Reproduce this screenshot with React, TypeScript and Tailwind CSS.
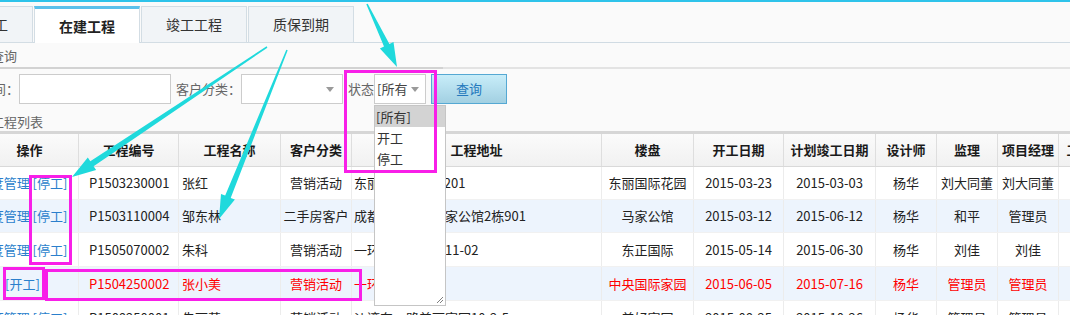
import React from "react";

type Row = {
  op: string;
  code: string;
  name: string;
  type: string;
  addr: string;
  estate: string;
  start: string;
  end: string;
  designer: string;
  sup: string;
  pm: string;
  red?: boolean;
  alt?: boolean;
  h: string;
};

const rows: Row[] = [
  { op: "进度管理 [停工]", code: "P1503230001", name: "张红", type: "营销活动", addr: "东丽国际花园1-201", estate: "东丽国际花园", start: "2015-03-23", end: "2015-03-03", designer: "杨华", sup: "刘大同董", pm: "刘大同董", h: "h-[33px]" },
  { op: "进度管理 [停工]", code: "P1503110004", name: "邹东林", type: "二手房客户", addr: "成都市金牛区马家公馆2栋901", estate: "马家公馆", start: "2015-03-12", end: "2015-06-12", designer: "杨华", sup: "和平", pm: "管理员", alt: true, h: "h-[33px]" },
  { op: "进度管理 [停工]", code: "P1505070002", name: "朱科", type: "营销活动", addr: "一环路锦绣花园11-02", estate: "东正国际", start: "2015-05-14", end: "2015-06-30", designer: "杨华", sup: "刘佳", pm: "刘佳", h: "h-[34px]" },
  { op: "[开工]", code: "P1504250002", name: "张小美", type: "营销活动", addr: "一环路锦绣花园", estate: "中央国际家园", start: "2015-06-05", end: "2015-07-16", designer: "杨华", sup: "管理员", pm: "管理员", red: true, alt: true, h: "h-[34px]" },
  { op: "进度管理 [停工]", code: "P1508250001", name: "朱丽英", type: "营销活动", addr: "沙湾东一路美丽家园10-2-5", estate: "美好家园", start: "2015-08-25", end: "2015-10-26", designer: "杨华", sup: "管理员", pm: "管理员", h: "h-[34px]" },
];

const headers = ["操作", "工程编号", "工程名称", "客户分类", "工程地址", "楼盘", "开工日期", "计划竣工日期", "设计师", "监理", "项目经理", "工程状态"];

const bodyAlign = [
  "justify-center pr-[14px]",
  "pl-[10px]",
  "pl-[3px]",
  "justify-center",
  "pl-[2px]",
  "justify-center",
  "justify-center",
  "justify-center",
  "justify-center",
  "justify-center",
  "justify-center",
  "justify-center",
];

const GRID =
  "grid grid-cols-[98px_100px_102px_71px_250px_92px_90px_92px_61px_61px_61px_68px]";

function Caret() {
  return (
    <svg width="8" height="5" viewBox="0 0 8 5">
      <path d="M0 0h8L4 5z" fill="#9a9a9a" />
    </svg>
  );
}

function Arrow({ sx, sy, tx, ty }: { sx: number; sy: number; tx: number; ty: number }) {
  const dx = tx - sx;
  const dy = ty - sy;
  const len = Math.hypot(dx, dy);
  const ux = dx / len;
  const uy = dy / len;
  const nx = -uy;
  const ny = ux;
  const L = 24;
  const hw = 7.5;
  const w1 = 3;
  const w0 = 0.8;
  const bx = tx - ux * L;
  const by = ty - uy * L;
  const p = (x: number, y: number) => `${x.toFixed(1)},${y.toFixed(1)}`;
  const pts = [
    p(sx + nx * w0, sy + ny * w0),
    p(bx + nx * w1, by + ny * w1),
    p(bx + nx * hw, by + ny * hw),
    p(tx, ty),
    p(bx - nx * hw, by - ny * hw),
    p(bx - nx * w1, by - ny * w1),
    p(sx - nx * w0, sy - ny * w0),
  ].join(" ");
  return <polygon points={pts} fill="#1fd9dc" />;
}

export default function App() {
  return (
    <div className="relative w-[1070px] h-[315px] overflow-hidden bg-[#fafafa] font-['Noto_Sans_CJK_SC','Microsoft_YaHei',sans-serif] text-[13px] text-[#222]">
      {/* top accent line */}
      <div className="h-[2px] bg-[#2ec3ea]" />
      <div className="h-[4px]" />

      {/* tabs */}
      <div className="h-[37px] border-b border-[#d0dbe3] flex gap-[1px] -ml-[73px]">
        <div className="w-[106px] h-[37px] flex items-center justify-center bg-[#f1f4f7] border border-[#d3dde4] text-[14px] text-[#333]">
          准备开工
        </div>
        <div className="w-[106px] h-[37px] flex items-center justify-center bg-white border-x border-[#d3dde4] border-t-[3px] border-t-[#5bc0eb] text-[14px] font-bold text-[#222]">
          在建工程
        </div>
        <div className="w-[106px] h-[37px] flex items-center justify-center bg-[#f1f4f7] border border-[#d3dde4] text-[14px] text-[#333]">
          竣工工程
        </div>
        <div className="w-[106px] h-[37px] flex items-center justify-center bg-[#f1f4f7] border border-[#d3dde4] text-[14px] text-[#333]">
          质保到期
        </div>
      </div>

      {/* query section title */}
      <div className="h-[24px] flex items-center -ml-[9px] text-[#666] pt-[1px]">查询</div>
      <div className="h-[2px] flex">
        <div className="w-[443px] bg-[#d2d2d2]" />
        <div className="flex-1 bg-[#e3e3e3]" />
      </div>

      {/* filter row */}
      <div className="mt-[5px] h-[30px] flex items-center -ml-[50px] text-[#666]">
        <div className="w-[69px] text-right whitespace-nowrap">开工时间：</div>
        <div className="w-[152px] h-[30px] bg-white border border-[#cccccc]" />
        <div className="ml-[5px] w-[65px] whitespace-nowrap">客户分类：</div>
        <div className="w-[102px] h-[30px] bg-white border border-[#cccccc] flex items-center justify-end pr-[8px]">
          <Caret />
        </div>
        <div className="ml-[5px] w-[26px] whitespace-nowrap">状态</div>
        <div className="w-[52px] h-[30px] bg-white border border-[#cccccc] flex items-center pl-[2px] text-[#444]">
          <span>[所有</span>
          <span className="ml-[4px] flex items-center">
            <Caret />
          </span>
        </div>
        <button className="ml-[5px] w-[76px] h-[30px] border border-[#55a8d3] bg-gradient-to-b from-[#c8edf9] to-[#a2d0e2] text-[#2579bd] text-[13px] flex items-center justify-center">
          查询
        </button>
      </div>

      {/* list title */}
      <div className="h-[27px] pt-[9px] leading-[18px] -ml-[9px] text-[#666]">工程列表</div>
      <div className="h-[3px] bg-[#d6d6d6]" />

      {/* table */}
      <div className="-ml-[19px] bg-white">
        <div className={`${GRID} h-[33px] bg-gradient-to-b from-[#fbfbfb] to-[#f1f1f1] border-b border-[#d9d9d9]`}>
          {headers.map((h) => (
            <div
              key={h}
              className="flex items-center justify-center font-bold text-[#1a1a1a] border-r border-[#dedede] whitespace-nowrap overflow-hidden"
            >
              {h}
            </div>
          ))}
        </div>
        {rows.map((r, i) => {
          const cells = [r.op, r.code, r.name, r.type, r.addr, r.estate, r.start, r.end, r.designer, r.sup, r.pm, ""];
          return (
            <div
              key={i}
              className={`${GRID} ${r.h} ${r.alt ? "bg-[#edf4fd]" : "bg-white"} border-b border-[#f1f1f1]`}
            >
              {cells.map((c, j) => (
                <div
                  key={j}
                  className={`flex items-center border-r border-[#ececec] whitespace-pre ${bodyAlign[j]} ${
                    j === 0 ? "text-[#2a7fcc]" : r.red ? "text-[#ff0000]" : "text-[#222]"
                  }`}
                >
                  {c}
                </div>
              ))}
            </div>
          );
        })}
      </div>

      {/* open dropdown list */}
      <div className="absolute left-[374px] top-[105px] w-[72px] h-[201px] bg-white border border-[#c5c5c5] text-[#333]">
        <div className="h-[21px] bg-[#d3d3d3] flex items-center pl-[1px]">[所有]</div>
        <div className="h-[21px] flex items-center pl-[2px]">开工</div>
        <div className="h-[21px] flex items-center pl-[2px]">停工</div>
        <svg className="absolute right-[1px] bottom-[1px]" width="9" height="9" viewBox="0 0 9 9">
          <path d="M8 2L2 8M8 5L5 8" stroke="#808080" strokeWidth="1" />
        </svg>
      </div>

      {/* annotations */}
      <svg className="absolute left-0 top-0 pointer-events-none" width="1070" height="315" viewBox="0 0 1070 315">
        <g fill="none" stroke="#f81fe8" strokeWidth="3">
          <rect x="345.5" y="71.5" width="90" height="100" />
          <rect x="30.5" y="176.5" width="40" height="87" />
          <rect x="4.5" y="268.5" width="39" height="30" />
          <rect x="46.5" y="270.5" width="314" height="29" />
        </g>
        <Arrow sx={267} sy={47} tx={72} ty={177} />
        <Arrow sx={287} sy={50} tx={219} ty={219} />
        <Arrow sx={367} sy={4} tx={397} ty={67} />
      </svg>
    </div>
  );
}
